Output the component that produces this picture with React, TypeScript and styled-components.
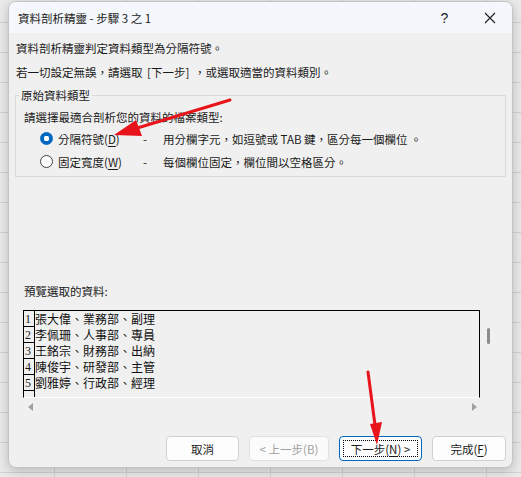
import React from "react";
import styled, { createGlobalStyle } from "styled-components";

const GlobalStyle = createGlobalStyle`
  html, body {
    margin: 0;
    padding: 0;
  }
  body {
    width: 521px;
    height: 477px;
    overflow: hidden;
    background-color: #ebebeb;
    background-image:
      linear-gradient(to right, #d3d3d3 1px, transparent 1px),
      linear-gradient(to bottom, #d3d3d3 1px, transparent 1px);
    background-size: 72px 100%, 100% 30px;
    background-position: 54px 0, 0 22px;
    font-family: "Noto Sans CJK TC", "Noto Sans", sans-serif;
    color: #1a1a1a;
  }
`;

const rows = [
  "張大偉、業務部、副理",
  "李佩珊、人事部、專員",
  "王銘宗、財務部、出納",
  "陳俊宇、研發部、主管",
  "劉雅婷、行政部、經理",
];

const App: React.FC = () => {
  return (
    <Page>
      <GlobalStyle />
      <Dialog>
        <TitleBar>
          <Title>資料剖析精靈 - 步驟 3 之 1</Title>
          <TitleButton>?</TitleButton>
          <TitleButton>
            <svg width="12" height="12" viewBox="0 0 12 12">
              <path d="M1 1 L11 11 M11 1 L1 11" stroke="#1a1a1a" strokeWidth="1.1" />
            </svg>
          </TitleButton>
        </TitleBar>
        <Body>
          <Intro>資料剖析精靈判定資料類型為分隔符號。</Intro>
          <Intro>若一切設定無誤，請選取 [下一步] ，或選取適當的資料類別。</Intro>
          <Group>
            <Legend>原始資料類型</Legend>
            <Subtitle>請選擇最適合剖析您的資料的檔案類型:</Subtitle>
            <RadioRow>
              <Radio $checked />
              <RadioLabel>
                分隔符號(<u>D</u>)
              </RadioLabel>
              <Dash>-</Dash>
              <Desc>用分欄字元，如逗號或 TAB 鍵，區分每一個欄位 。</Desc>
            </RadioRow>
            <RadioRow>
              <Radio />
              <RadioLabel>
                固定寬度(<u>W</u>)
              </RadioLabel>
              <Dash>-</Dash>
              <Desc>每個欄位固定，欄位間以空格區分。</Desc>
            </RadioRow>
          </Group>
          <PreviewLabel>預覽選取的資料:</PreviewLabel>
          <PreviewFrame>
            <PreviewTop>
              <Grid>
                {rows.map((r, i) => (
                  <GridRow key={i}>
                    <RowNum>{i + 1}</RowNum>
                    <RowText>{r}</RowText>
                  </GridRow>
                ))}
                <GridRow>
                  <RowNum />
                  <RowText />
                </GridRow>
              </Grid>
              <VScroll>
                <Thumb />
              </VScroll>
            </PreviewTop>
            <HScroll>
              <Arrow $dir="left" />
              <Arrow $dir="right" />
            </HScroll>
          </PreviewFrame>
          <Buttons>
            <Button $w={73}>取消</Button>
            <Button $w={80} disabled>
              &lt; 上一步(B)
            </Button>
            <Button $w={83} $focused>
              <FocusRing>
                下一步(<u>N</u>) &gt;
              </FocusRing>
            </Button>
            <Button $w={74}>
              完成(<u>F</u>)
            </Button>
          </Buttons>
        </Body>
      </Dialog>
      <Annotations width="521" height="477" viewBox="0 0 521 477">
        <line x1="230" y1="100" x2="134" y2="129" stroke="#e8141c" strokeWidth="3" strokeLinecap="round" />
        <polygon points="114,135 142,136 136,120" fill="#e8141c" />
        <line x1="368" y1="372" x2="375" y2="425" stroke="#e8141c" strokeWidth="3" strokeLinecap="round" />
        <polygon points="377,445 382,422 370,424" fill="#e8141c" />
      </Annotations>
    </Page>
  );
};

export default App;

const Page = styled.div`
  position: relative;
  width: 521px;
  height: 477px;
  padding-top: 1px;
  box-sizing: border-box;
`;

const Dialog = styled.div`
  margin-left: 8px;
  width: 505px;
  height: 467px;
  box-sizing: border-box;
  display: flex;
  flex-direction: column;
  background: #f0f0f0;
  border: 1px solid #c4c4c4;
  border-radius: 8px;
  box-shadow: 0 3px 12px rgba(0, 0, 0, 0.22);
  overflow: hidden;
`;

const TitleBar = styled.div`
  height: 31px;
  flex: none;
  display: flex;
  align-items: center;
  padding-left: 9px;
  background: #f4f7fb;
`;

const Title = styled.div`
  flex: 1;
  font-size: 11.5px;
  line-height: 16px;
`;

const TitleButton = styled.div`
  width: 45px;
  height: 31px;
  display: flex;
  align-items: center;
  justify-content: center;
  font-family: "Liberation Sans", sans-serif;
  font-size: 14px;
`;

const Body = styled.div`
  flex: 1;
  display: flex;
  flex-direction: column;
  padding: 3px 6px 0;
`;

const Intro = styled.div`
  padding-left: 1px;
  font-size: 11.5px;
  line-height: 24px;
  word-spacing: 2px;
`;

const Group = styled.fieldset`
  margin: 4px 0 0;
  padding: 5px 8px 3px;
  min-width: 0;
  border: 1px solid #dadada;
`;

const Legend = styled.legend`
  margin-left: -5px;
  padding: 0 2px;
  font-size: 11.5px;
  line-height: 14px;
`;

const Subtitle = styled.div`
  font-size: 11.5px;
  line-height: 20px;
`;

const RadioRow = styled.div`
  height: 23px;
  display: flex;
  align-items: center;
  padding-left: 16px;
  font-size: 11.5px;
`;

const Radio = styled.span<{ $checked?: boolean }>`
  width: 13px;
  height: 13px;
  box-sizing: border-box;
  border-radius: 50%;
  flex: none;
  background: ${({ $checked }) =>
    $checked ? "radial-gradient(circle, #ffffff 0 2.6px, #0067c0 3px)" : "#fbfbfb"};
  border: 1px solid ${({ $checked }) => ($checked ? "#0067c0" : "#444444")};
`;

const RadioLabel = styled.span`
  width: 85px;
  margin-left: 5px;
  flex: none;

  u {
    text-underline-offset: 2px;
  }
`;

const Dash = styled.span`
  width: 20px;
  flex: none;
`;

const Desc = styled.span``;

const PreviewLabel = styled.div`
  margin-top: 104px;
  padding-left: 9px;
  font-size: 11.5px;
  line-height: 20px;
`;

const PreviewFrame = styled.div`
  margin: 9px 0 0 8px;
  width: 474px;
  height: 106px;
  display: flex;
  flex-direction: column;
`;

const PreviewTop = styled.div`
  height: 88px;
  display: flex;
`;

const Grid = styled.div`
  flex: 1;
  border: 1px solid #000000;
  border-bottom-color: #ffffff;
  overflow: hidden;
`;

const GridRow = styled.div`
  height: 16px;
  display: flex;
`;

const RowNum = styled.span`
  width: 11px;
  flex: none;
  box-sizing: border-box;
  border-right: 1px solid #000000;
  border-bottom: 1px solid #000000;
  padding-left: 1px;
  font-family: "Liberation Serif", serif;
  font-size: 12px;
  line-height: 17px;
`;

const RowText = styled.span`
  font-size: 12px;
  line-height: 15px;
  color: #111111;
`;

const VScroll = styled.div`
  width: 17px;
  flex: none;
  display: flex;
  justify-content: center;
  padding-top: 18px;
  box-sizing: border-box;
`;

const Thumb = styled.div`
  width: 3px;
  height: 16px;
  border-radius: 2px;
  background: #8c8c8c;
`;

const HScroll = styled.div`
  height: 18px;
  width: 458px;
  display: flex;
  align-items: center;
  justify-content: space-between;
  padding: 0 4px 0 5px;
  box-sizing: border-box;
`;

const Arrow = styled.span<{ $dir: "left" | "right" }>`
  width: 0;
  height: 0;
  border-top: 4px solid transparent;
  border-bottom: 4px solid transparent;
  ${({ $dir }) =>
    $dir === "left" ? "border-right: 5px solid #a0a0a0;" : "border-left: 5px solid #a0a0a0;"}
`;

const Buttons = styled.div`
  margin-top: 20px;
  display: flex;
  justify-content: flex-end;
  gap: 10px;
`;

const Button = styled.button<{ $w: number; $focused?: boolean }>`
  width: ${({ $w }) => $w}px;
  height: 25px;
  padding: 0;
  box-sizing: border-box;
  display: flex;
  align-items: center;
  justify-content: center;
  border: 1px solid ${({ $focused }) => ($focused ? "#0067c0" : "#d0d0d0")};
  border-radius: 4px;
  background: #fdfdfd;
  font-family: "Noto Sans CJK TC", sans-serif;
  font-size: 11.5px;
  color: #1a1a1a;

  &:disabled {
    color: #a0a0a0;
    border-color: #e0e0e0;
    background: #fbfbfb;
  }

  u {
    text-underline-offset: 2px;
  }
`;

const FocusRing = styled.span`
  display: flex;
  align-items: center;
  justify-content: center;
  width: calc(100% - 6px);
  height: calc(100% - 6px);
  border: 1px dotted #000000;
  box-sizing: border-box;
`;

const Annotations = styled.svg`
  position: absolute;
  top: 0;
  left: 0;
  pointer-events: none;
`;
